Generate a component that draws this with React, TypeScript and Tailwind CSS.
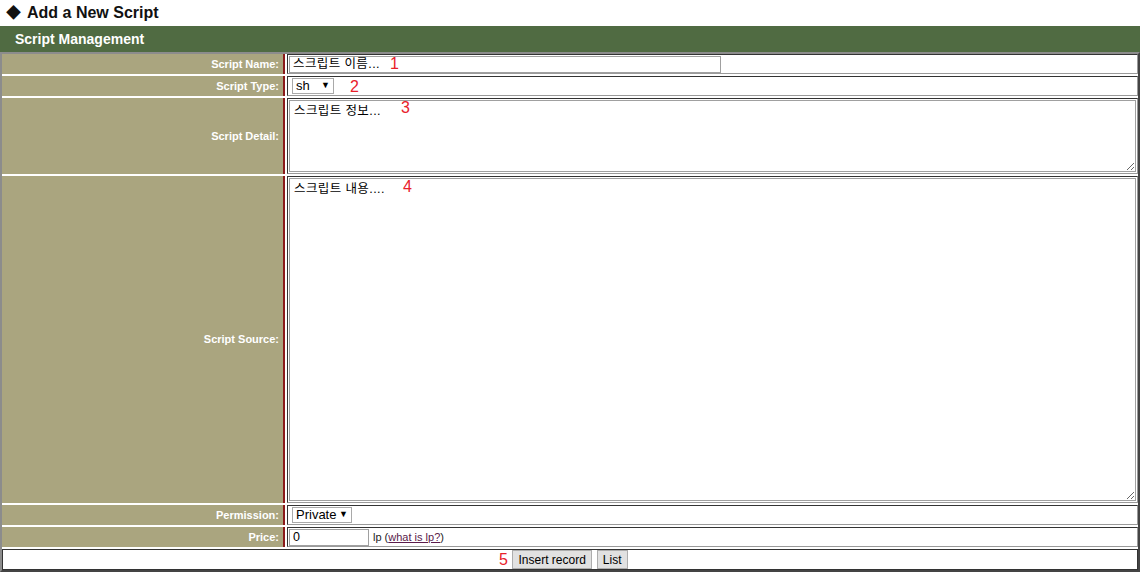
const font = { fontFamily: '"Liberation Sans", "Noto Sans CJK KR", sans-serif' };
const boxFont = { fontFamily: '"Liberation Sans", "Noto Sans CJK KR", sans-serif', letterSpacing: "0.4px" };

const Label = ({ text, h }: { text: string; h: string }) => (
  <div
    className={`${h} bg-[#aaa57f] border-r-2 border-[#8b1a1a] flex items-center justify-end pr-[4px] text-[11px] font-bold text-white`}
  >
    {text}
  </div>
);

const Mark = ({ n, className }: { n: string; className: string }) => (
  <span className={`absolute text-[16px] leading-none text-[#e8202a] ${className}`}>{n}</span>
);

const Cell = ({ h, children }: { h: string; children?: React.ReactNode }) => (
  <div
    className={`${h} relative border border-t-[#333] border-l-[#333] border-b-[#9a9a9a] border-r-[#9a9a9a] p-[1px] bg-white`}
  >
    {children}
  </div>
);

export default function App() {
  return (
    <div className="w-[1140px] h-[572px] bg-white text-[#111] overflow-hidden" style={font}>
      <div className="h-[26px] flex items-center pl-[6px] gap-[6px] text-[16px] font-bold">
        <span className="text-[15px]">◆</span>
        <span>Add a New Script</span>
      </div>
      <div className="h-[26px] bg-[#506b42] flex items-center pl-[15px] text-[14px] font-bold text-white">
        Script Management
      </div>
      <div className="border-2 border-t-[#8c8c8c] border-l-[#8c8c8c] border-b-[#444] border-r-[#444] grid grid-cols-[283px_1fr] gap-[2px]">
        <Label text="Script Name:" h="h-[20px]" />
        <Cell h="h-[20px]">
          <input
            readOnly
            value="스크립트 이름..."
            className="block w-[432px] h-[17px] border border-[#a0a0a0] px-[3px] text-[12.5px] text-black outline-none"
            style={boxFont}
          />
          <Mark n="1" className="left-[102px] top-[1px]" />
        </Cell>

        <Label text="Script Type:" h="h-[20px]" />
        <Cell h="h-[20px]">
          <div className="ml-[3px] w-[42px] h-[16px] border border-[#a9a9a9] flex items-center justify-between px-[3px] text-[13px] text-black">
            <span>sh</span>
            <span className="text-[9px]">▼</span>
          </div>
          <Mark n="2" className="left-[62px] top-[2px]" />
        </Cell>

        <Label text="Script Detail:" h="h-[76px]" />
        <Cell h="h-[76px]">
          <textarea
            readOnly
            value="스크립트 정보..."
            className="w-full h-full block border border-[#a0a0a0] px-[4px] py-[1px] text-[12.5px] text-black outline-none resize-y"
            style={boxFont}
          />
          <Mark n="3" className="left-[113px] top-[1px]" />
        </Cell>

        <Label text="Script Source:" h="h-[327px]" />
        <Cell h="h-[327px]">
          <textarea
            readOnly
            value="스크립트 내용...."
            className="w-full h-full block border border-[#a0a0a0] px-[4px] py-[1px] text-[12.5px] text-black outline-none resize-y"
            style={boxFont}
          />
          <Mark n="4" className="left-[115px] top-[2px]" />
        </Cell>

        <Label text="Permission:" h="h-[20px]" />
        <Cell h="h-[20px]">
          <div className="ml-[3px] w-[60px] h-[16px] border border-[#a9a9a9] flex items-center justify-between px-[3px] text-[13px] text-black">
            <span>Private</span>
            <span className="text-[9px]">▼</span>
          </div>
        </Cell>

        <Label text="Price:" h="h-[20px]" />
        <Cell h="h-[20px]">
          <div className="flex items-center h-full">
            <input
              readOnly
              value="0"
              className="block w-[80px] h-[17px] border border-[#a0a0a0] px-[3px] text-[12.5px] text-black outline-none"
              style={font}
            />
            <span className="ml-[4px] text-[11px] text-[#222]">
              lp (<span className="underline text-[#5a1a4a]">what is lp?</span>)
            </span>
          </div>
        </Cell>

        <div className="col-span-2 relative h-[21px] border border-[#333] flex items-center justify-center gap-[5px] bg-white">
          <Mark n="5" className="left-[496px] top-[2px]" />
          <button className="h-[19px] px-[5px] bg-[#e1e1e1] border border-[#adadad] text-[12px] text-black" style={font}>
            Insert record
          </button>
          <button className="h-[19px] px-[5px] bg-[#e1e1e1] border border-[#adadad] text-[12px] text-black" style={font}>
            List
          </button>
        </div>
      </div>
    </div>
  );
}
